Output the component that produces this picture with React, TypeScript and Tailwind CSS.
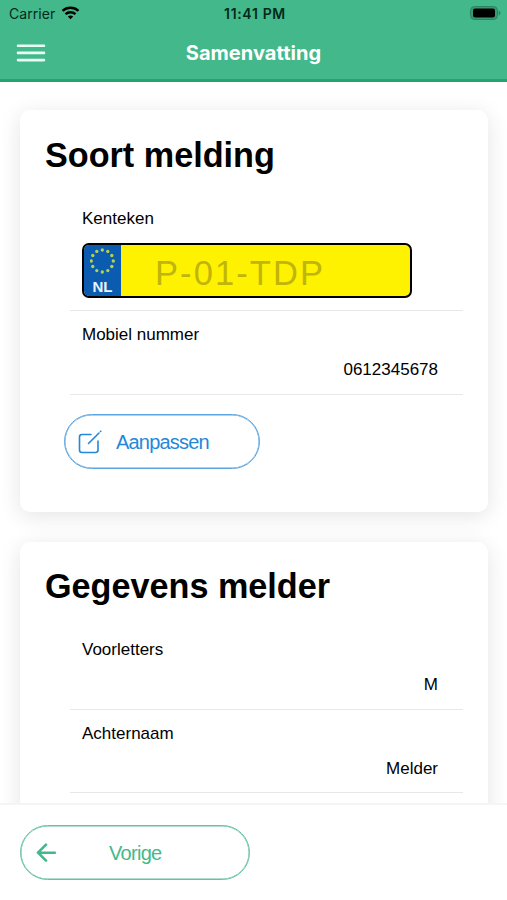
import type { ReactNode } from "react";

const HELVETICA = "font-['Liberation_Sans',Arial,sans-serif]";
const SYSTEM = "font-[Inter,'Liberation_Sans',sans-serif]";

function StatusBar() {
  return (
    <div className={`grid h-7 grid-cols-3 items-center pl-[9px] pr-[6px] text-[#03291b] ${SYSTEM}`}>
      <div className="flex items-center gap-[6px]">
        <span className="text-[14px] leading-7 tracking-[0.05px]">Carrier</span>
        <svg className="-mt-[2px]" width="19" height="14" viewBox="0 0 18 14" fill="none" stroke="#000" strokeWidth="2.5">
          <path d="M1 4.8 C5.5 .6 12.5 .6 17 4.8" />
          <path d="M4 8.1 C6.8 5.5 11.2 5.5 14 8.1" />
          <path d="M6.3 10.5 C7.8 9.1 10.2 9.1 11.7 10.5 L9 13.3Z" fill="#000" stroke="none" />
        </svg>
      </div>
      <span className="whitespace-nowrap text-center text-[14px] font-semibold leading-7 tracking-[0.65px]">11:41 PM</span>
      <svg className="-mt-[2px] justify-self-end" width="31" height="14" viewBox="0 0 31 14">
        <rect x="0.5" y="0.5" width="27" height="13" rx="4" fill="#369a71" stroke="#2c8561" />
        <rect x="3" y="2.5" width="22" height="9" rx="2" fill="#000" />
        <path d="M28.7 4.5 C31 5.4 31 8.6 28.7 9.5Z" fill="#2c8561" />
      </svg>
    </div>
  );
}

function Header() {
  return (
    <header className="h-[82px] shrink-0 border-b-[3px] border-[#27a371] bg-[#43b98b]">
      <StatusBar />
      <div className="grid h-[50px] grid-cols-[60px_1fr_60px] items-center">
        <svg className="ml-4" width="30" height="20" viewBox="0 0 30 20" stroke="#e9fff6" strokeWidth="2.6" strokeLinecap="round">
          <path d="M2 2.7H28M2 9.9H28M2 17.1H28" />
        </svg>
        <h1 className={`text-center text-[20px] font-bold leading-[50px] tracking-[0.05px] text-white ${SYSTEM}`}>
          Samenvatting
        </h1>
      </div>
    </header>
  );
}

function Card({ title, className, children }: { title: string; className: string; children: ReactNode }) {
  return (
    <section className={`h-[402px] shrink-0 rounded-[10px] bg-white shadow-[0_4px_22px_rgba(0,0,0,0.11)] ${className}`}>
      <h2 className="pl-[25px] text-[34.2px] font-bold leading-10">{title}</h2>
      {children}
    </section>
  );
}

function Row({ label, value }: { label: string; value: string }) {
  return (
    <div className="h-[83.5px] border-b-[1.5px] border-[#e8e8e8] pl-3 pr-[25px] text-[17px]">
      <div className="pt-[14px] leading-5">{label}</div>
      <div className="pt-[15.4px] text-right leading-5">{value}</div>
    </div>
  );
}

function EuroStars() {
  const stars = Array.from({ length: 12 }, (_, i) => (i * Math.PI) / 6);
  return (
    <svg width="26" height="26" viewBox="0 0 26 26" fill="#b7d34b">
      {stars.map((a) => (
        <circle key={a} cx={12.3 + 11 * Math.sin(a)} cy={13 - 11 * Math.cos(a)} r="1.65" />
      ))}
    </svg>
  );
}

function LicensePlate() {
  return (
    <div className="flex h-[55px] w-[330px] overflow-hidden rounded-[7px] border-[2.5px] border-black bg-[#fff200]">
      <div className="flex w-[37px] flex-col items-center bg-[#0b5cb0] pt-[3px]">
        <EuroStars />
        <span className="mt-[5px] text-[15px] font-bold leading-4 text-[#e8f4ff]">NL</span>
      </div>
      <span className="pl-[34px] pt-[3px] text-[34.5px] leading-[50px] tracking-[2.1px] text-[#bfb50c]">P-01-TDP</span>
    </div>
  );
}

export default function App() {
  return (
    <div className={`flex h-[900px] w-full flex-col overflow-hidden bg-white text-black ${HELVETICA}`}>
      <Header />
      <main className="flex min-h-0 flex-1 flex-col gap-[30px] overflow-hidden pl-5 pr-[19px] pt-7">
        <Card title="Soort melding" className="pt-[25px]">
          <div className="ml-[50px] mr-[25px] mt-5">
            <div className="h-[116px] border-b-[1.5px] border-[#e8e8e8] pl-3">
              <div className="pb-[14px] pt-[14px] text-[17px] leading-5">Kenteken</div>
              <LicensePlate />
            </div>
            <Row label="Mobiel nummer" value="0612345678" />
          </div>
          <button className="ml-11 mt-[19.5px] flex h-[55px] w-[196px] items-center rounded-full border border-[#5ba5e1] pl-[13px] text-[20px] tracking-[-0.8px] text-[#2488d8] shadow-[inset_0_0_0_0.5px_#5ba5e1]">
            <svg width="25" height="24" viewBox="0 0 25 24" fill="none" stroke="currentColor" strokeWidth="1.6" strokeLinecap="round" strokeLinejoin="round">
              <path d="M13 4.5H4Q1.5 4.5 1.5 7V20Q1.5 22.5 4 22.5H17.5Q20 22.5 20 20V11M10.5 13.5 21 3M22.5 1.5 22.8 1.2" />
            </svg>
            <span className="ml-[13px] pt-px">Aanpassen</span>
          </button>
        </Card>
        <Card title="Gegevens melder" className="pt-[24px]">
          <div className="ml-[50px] mr-[25px] mt-[20px]">
            <Row label="Voorletters" value="M" />
            <Row label="Achternaam" value="Melder" />
          </div>
        </Card>
      </main>
      <footer className="h-[97px] shrink-0 border-t-2 border-[#f5f5f5] bg-white pl-5 pt-5">
        <button className="flex h-[55px] w-[230px] items-center rounded-full border border-[#66c29f] pl-[15px] text-[20px] tracking-[-0.7px] text-[#43b98b] shadow-[inset_0_0_0_0.5px_#66c29f]">
          <svg width="21" height="20" viewBox="0 0 21 20" fill="none" stroke="currentColor" strokeWidth="2.6" strokeLinecap="round" strokeLinejoin="round">
            <path d="M18.8 9.7H2M10 1.7 2 9.7 10 17.7" />
          </svg>
          <span className="ml-[52px] pt-px">Vorige</span>
        </button>
      </footer>
    </div>
  );
}
